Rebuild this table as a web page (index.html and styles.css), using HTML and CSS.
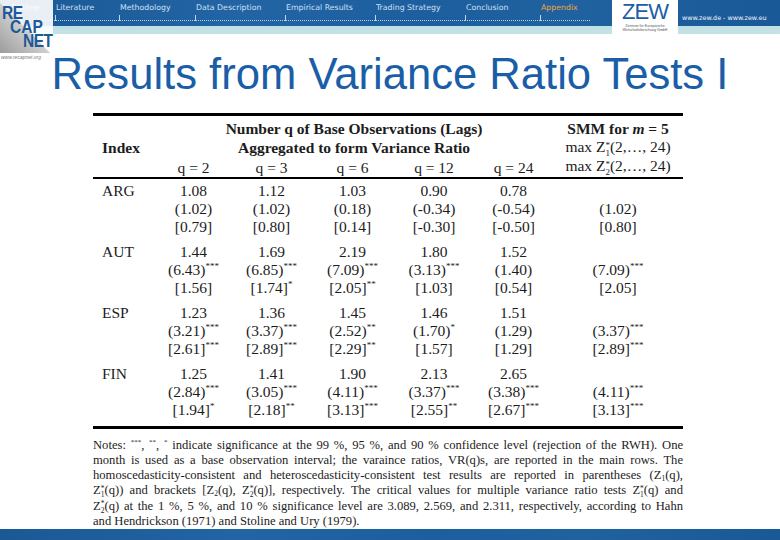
FILE: index.html
```html
<!DOCTYPE html>
<html>
<head>
<meta charset="utf-8">
<link rel="stylesheet" href="styles.css">
</head>
<body>
<header class="top">
  <nav class="nav">
    <div class="nav-item n-outline"><span class="nav-label">Outline</span><span class="nav-rule"></span></div>
    <div class="nav-item n-lit"><span class="nav-label">Literature</span><span class="nav-rule"></span></div>
    <div class="nav-item n-meth"><span class="nav-label">Methodology</span><span class="nav-rule"></span></div>
    <div class="nav-item n-wide"><span class="nav-label">Data Description</span><span class="nav-rule"></span></div>
    <div class="nav-item n-wide"><span class="nav-label">Empirical Results</span><span class="nav-rule"></span></div>
    <div class="nav-item n-wide"><span class="nav-label">Trading Strategy</span><span class="nav-rule"></span></div>
    <div class="nav-item n-concl"><span class="nav-label">Conclusion</span><span class="nav-rule"></span></div>
    <div class="nav-item n-app active"><span class="nav-label">Appendix</span><span class="nav-rule"></span></div>
  </nav>
  <div class="zew">
    <span class="zew-mark">ZEW</span>
    <span class="zew-sub">Zentrum für Europäische<br>Wirtschaftsforschung GmbH</span>
  </div>
  <div class="zew-url">www.zew.de - www.zew.eu</div>
  <div class="logo">
    <div class="logo-box">
      <span class="lg lg-re">RE</span>
      <span class="lg lg-cap">CAP</span>
      <span class="lg lg-net">NET</span>
    </div>
    <div class="logo-url">www.recapnet.org</div>
  </div>
</header>

<main class="content">
  <h1 class="title">Results from Variance Ratio Tests I</h1>

  <table class="vr">
    <colgroup>
      <col class="c-idx"><col class="c-q2"><col class="c-q3"><col class="c-q6"><col class="c-q12"><col class="c-q24"><col class="c-smm">
    </colgroup>
    <thead>
      <tr class="h1">
        <td></td>
        <th colspan="5" class="b">Number q of Base Observations (Lags)</th>
        <th class="b">SMM for <i>m</i> = 5</th>
      </tr>
      <tr class="h2">
        <th class="b idx">Index</th>
        <th colspan="5" class="b">Aggregated to form Variance Ratio</th>
        <td>max Z<span class="zs"><span>*</span><span>1</span></span>(2,…, 24)</td>
      </tr>
      <tr class="h3">
        <td></td>
        <td>q = 2</td><td>q = 3</td><td>q = 6</td><td>q = 12</td><td>q = 24</td>
        <td class="smm">max Z<span class="zs"><span>*</span><span>2</span></span>(2,…, 24)</td>
      </tr>
    </thead>
    <tbody>
      <tr class="g0"><td class="idx">ARG</td><td>1.08</td><td>1.12</td><td>1.03</td><td>0.90</td><td>0.78</td><td></td></tr>
      <tr><td></td><td>(1.02)</td><td>(1.02)</td><td>(0.18)</td><td>(-0.34)</td><td>(-0.54)</td><td>(1.02)</td></tr>
      <tr><td></td><td>[0.79]</td><td>[0.80]</td><td>[0.14]</td><td>[-0.30]</td><td>[-0.50]</td><td>[0.80]</td></tr>

      <tr class="g"><td class="idx">AUT</td><td>1.44</td><td>1.69</td><td>2.19</td><td>1.80</td><td>1.52</td><td></td></tr>
      <tr><td></td><td>(6.43)<sup class="s">***</sup></td><td>(6.85)<sup class="s">***</sup></td><td>(7.09)<sup class="s">***</sup></td><td>(3.13)<sup class="s">***</sup></td><td>(1.40)</td><td>(7.09)<sup class="s">***</sup></td></tr>
      <tr><td></td><td>[1.56]</td><td>[1.74]<sup class="s">*</sup></td><td>[2.05]<sup class="s">**</sup></td><td>[1.03]</td><td>[0.54]</td><td>[2.05]</td></tr>

      <tr class="g"><td class="idx">ESP</td><td>1.23</td><td>1.36</td><td>1.45</td><td>1.46</td><td>1.51</td><td></td></tr>
      <tr><td></td><td>(3.21)<sup class="s">***</sup></td><td>(3.37)<sup class="s">***</sup></td><td>(2.52)<sup class="s">**</sup></td><td>(1.70)<sup class="s">*</sup></td><td>(1.29)</td><td>(3.37)<sup class="s">***</sup></td></tr>
      <tr><td></td><td>[2.61]<sup class="s">***</sup></td><td>[2.89]<sup class="s">***</sup></td><td>[2.29]<sup class="s">**</sup></td><td>[1.57]</td><td>[1.29]</td><td>[2.89]<sup class="s">***</sup></td></tr>

      <tr class="g"><td class="idx">FIN</td><td>1.25</td><td>1.41</td><td>1.90</td><td>2.13</td><td>2.65</td><td></td></tr>
      <tr><td></td><td>(2.84)<sup class="s">***</sup></td><td>(3.05)<sup class="s">***</sup></td><td>(4.11)<sup class="s">***</sup></td><td>(3.37)<sup class="s">***</sup></td><td>(3.38)<sup class="s">***</sup></td><td>(4.11)<sup class="s">***</sup></td></tr>
      <tr class="last"><td></td><td>[1.94]<sup class="s">*</sup></td><td>[2.18]<sup class="s">**</sup></td><td>[3.13]<sup class="s">***</sup></td><td>[2.55]<sup class="s">**</sup></td><td>[2.67]<sup class="s">***</sup></td><td>[3.13]<sup class="s">***</sup></td></tr>
    </tbody>
  </table>

  <div class="notes">
    <div class="nl">Notes: <sup class="ns">***</sup>, <sup class="ns">**</sup>, <sup class="ns">*</sup> indicate significance at the 99 %, 95 %, and 90 % confidence level (rejection of the RWH). One</div>
    <div class="nl">month is used as a base observation interval; the varaince ratios, VR(q)s, are reported in the main rows. The</div>
    <div class="nl">homoscedasticity-consistent and heteroscedasticity-consistent test results are reported in parentheses (Z<sub class="nb">1</sub>(q),</div>
    <div class="nl">Z<span class="nz"><span>*</span><span>1</span></span>(q)) and brackets [Z<sub class="nb">2</sub>(q), Z<span class="nz"><span>*</span><span>2</span></span>(q)], respectively. The critical values for multiple variance ratio tests Z<span class="nz"><span>*</span><span>1</span></span>(q) and</div>
    <div class="nl">Z<span class="nz"><span>*</span><span>2</span></span>(q) at the 1 %, 5 %, and 10 % significance level are 3.089, 2.569, and 2.311, respectively, according to Hahn</div>
    <div class="nl end">and Hendrickson (1971) and Stoline and Ury (1979).</div>
  </div>
</main>

<footer class="bottom"></footer>
</body>
</html>
```
FILE: styles.css
```css
* { box-sizing: border-box; }
html, body { margin: 0; padding: 0; }
body {
  width: 780px;
  height: 540px;
  overflow: hidden;
  display: flex;
  flex-direction: column;
  background: #fff;
  font-family: "Liberation Serif", "Times New Roman", serif;
}

/* ---------- header ---------- */
.top {
  position: relative;
  flex: none;
  height: 34px;
  display: flex;
  align-items: flex-start;
  background:
    linear-gradient(to bottom, transparent 0, transparent 26px, #bfe0e4 26px, #c3e3e6 34px),
    linear-gradient(90deg, #1b5896 0%, #2264a4 30%, #1d5e9e 55%, #2061a0 75%, #1a5998 100%);
}
.nav {
  display: flex;
  width: 612px;
  height: 26px;
  padding-left: 10px;
  font-family: "DejaVu Sans", sans-serif;
  font-size: 7.8px;
  color: #cfe0f2;
}
.nav-item { display: flex; flex-direction: column; flex: none; }
.nav-label { height: 12px; padding: 3px 0 0 1px; line-height: 9px; white-space: nowrap; }
.nav-rule {
  margin-top: 3px;
  height: 6px;
  border-left: 1px solid #c3d7ec;
  border-bottom: 1px dotted #b9d0ea;
}
.n-outline { width: 45px; }
.n-lit { width: 64px; }
.n-meth { width: 76px; }
.n-wide { width: 90px; }
.n-concl { width: 75px; }
.n-app { width: 50px; }
.nav-item.active .nav-label { color: #f0a83c; }

.zew {
  flex: none;
  width: 66px;
  height: 34px;
  background: #fff;
  display: flex;
  flex-direction: column;
  align-items: center;
  color: #1c5ea5;
}
.zew-mark {
  margin-top: 1px;
  font-family: "Liberation Sans", Arial, sans-serif;
  font-size: 22px;
  line-height: 22px;
  letter-spacing: -1px;
}
.zew-sub {
  margin-top: 1px;
  font-family: "Liberation Sans", Arial, sans-serif;
  font-size: 3.6px;
  line-height: 4.4px;
  color: #555;
  text-align: center;
  white-space: nowrap;
}
.zew-url {
  padding: 14px 0 0 4px;
  font-family: "DejaVu Sans", sans-serif;
  font-size: 6.4px;
  line-height: 8px;
  color: #eef4fa;
  white-space: nowrap;
}

.logo {
  position: absolute;
  left: 0;
  top: 0;
  width: 53px;
}
.logo-box {
  width: 53px;
  height: 53px;
  padding-top: 6px;
  display: flex;
  flex-direction: column;
  background: linear-gradient(to top right, #9c9c9c 0%, #cfcfcf 47%, rgba(255,255,255,0.9) 47.5%, rgba(255,255,255,0.9) 100%);
  font-family: "Liberation Sans", Arial, sans-serif;
  font-weight: bold;
  font-size: 15.5px;
  line-height: 14px;
  color: #1d5a97;
}
.lg { display: block; transform: scaleY(1.15); transform-origin: left center; }
.lg-re { padding-left: 2px; letter-spacing: -0.5px; }
.lg-cap { padding-left: 10px; }
.lg-net { padding-left: 23px; letter-spacing: -0.5px; }
.logo-url {
  padding: 1px 0 0 1px;
  font-family: "Liberation Sans", Arial, sans-serif;
  font-size: 5px;
  line-height: 6px;
  color: #7a7a7a;
  font-style: italic;
  white-space: nowrap;
}

/* ---------- content ---------- */
.content { flex: none; }
.title {
  margin: 18px 0 0;
  font-family: "Liberation Sans", Arial, sans-serif;
  font-weight: normal;
  font-size: 43.6px;
  line-height: 44px;
  color: #1a5ea7;
  text-align: center;
}

.vr {
  width: 590px;
  margin: 17px 0 0 93px;
  border-collapse: separate;
  border-spacing: 0;
  table-layout: fixed;
  border-top: 3px solid #000;
  border-bottom: 3px solid #000;
  font-size: 15.5px;
  line-height: 18px;
  color: #1c1c1c;
}
.c-idx { width: 62px; }
.c-q2 { width: 77px; }
.c-q3 { width: 79px; }
.c-q6 { width: 83px; }
.c-q12 { width: 80px; }
.c-q24 { width: 79px; }
.c-smm { width: 130px; }
.vr th, .vr td {
  padding: 0;
  text-align: center;
  white-space: nowrap;
  font-weight: normal;
}
.vr .b { font-weight: bold; }
.vr .idx { text-align: left; padding-left: 9px; }
.vr .h1 > * { padding-top: 4px; }
.vr .h3 > * {
  height: 22px;
  vertical-align: bottom;
  border-bottom: 2px solid #000;
}
.vr .h3 > .smm { vertical-align: top; }
.vr .g0 > * { padding-top: 3px; }
.vr .g > * { padding-top: 7px; }
.vr .last > * { padding-bottom: 7px; }
.s {
  font-size: 9px;
  line-height: 0;
  vertical-align: 6px;
}
.zs {
  display: inline-block;
  vertical-align: -4px;
  font-size: 9px;
  line-height: 8px;
  text-align: left;
}
.zs > span { display: block; }

.notes {
  width: 590px;
  margin: 9px 0 0 93px;
  font-size: 12.6px;
  line-height: 15px;
  color: #1c1c1c;
}
.nl { text-align: justify; text-align-last: justify; }
.nl.end { text-align-last: left; }
.ns { font-size: 7px; line-height: 0; vertical-align: 5px; }
.nb { font-size: 7.5px; line-height: 0; vertical-align: -2px; }
.nz {
  display: inline-block;
  vertical-align: -3px;
  font-size: 7.5px;
  line-height: 6.5px;
}
.nz > span { display: block; }

.bottom {
  flex: none;
  margin-top: auto;
  height: 12px;
  background: linear-gradient(90deg, #1b5896 0%, #2264a4 30%, #1d5e9e 55%, #2061a0 75%, #1a5998 100%);
}
```
